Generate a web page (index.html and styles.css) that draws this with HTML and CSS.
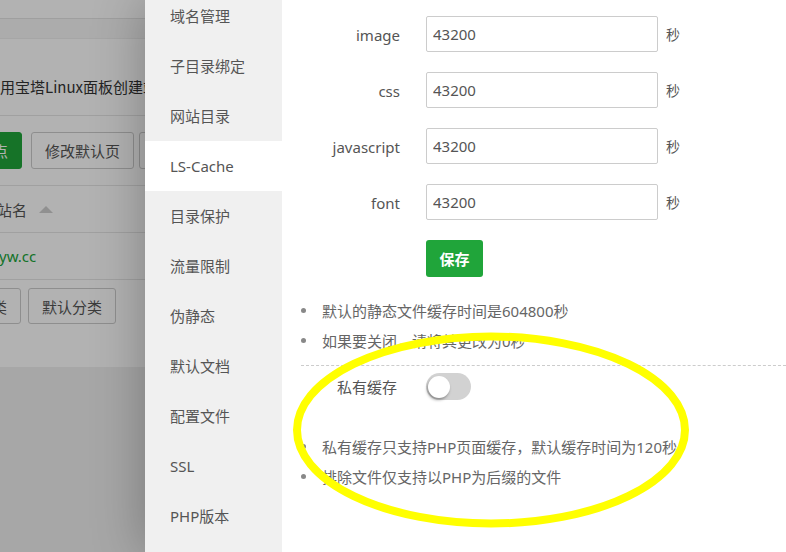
FILE: index.html
```html
<!DOCTYPE html>
<html lang="zh-CN">
<head>
    <meta charset="UTF-8">
    <meta name="viewport" content="width=device-width, initial-scale=1.0">
    <title>LS-Cache</title>
    <link rel="stylesheet" href="styles.css">
</head>
<body>
    <!-- site list page behind the layer -->
    <div class="backdrop">
        <div class="site-page">
            <div class="bar-top"></div>
            <div class="bar-tabs"></div>
            <div class="bar-tip"><span class="tip-text">使用宝塔Linux面板创建站点</span></div>
            <div class="bar-tools">
                <button class="btn btn-green">添加站点</button>
                <button class="btn">修改默认页</button>
                <button class="btn">默认站点</button>
            </div>
            <div class="bar-head"><span class="head-text">网站名</span><span class="sort-up"></span></div>
            <div class="bar-row"><span class="site-link">yw.cc</span></div>
            <div class="bar-cats">
                <button class="btn btn-cut">分类</button>
                <button class="btn">默认分类</button>
            </div>
        </div>
        <div class="shade"></div>
    </div>

    <div class="panel">
        <ul class="tabs">
            <li>域名管理</li>
            <li>子目录绑定</li>
            <li>网站目录</li>
            <li class="active">LS-Cache</li>
            <li>目录保护</li>
            <li>流量限制</li>
            <li>伪静态</li>
            <li>默认文档</li>
            <li>配置文件</li>
            <li>SSL</li>
            <li>PHP版本</li>
        </ul>

        <div class="content">
            <form class="cache-form">
                <div class="form-row">
                    <label for="image">image</label>
                    <input type="text" id="image" value="43200">
                    <span class="unit">秒</span>
                </div>
                <div class="form-row">
                    <label for="css">css</label>
                    <input type="text" id="css" value="43200">
                    <span class="unit">秒</span>
                </div>
                <div class="form-row">
                    <label for="javascript">javascript</label>
                    <input type="text" id="javascript" value="43200">
                    <span class="unit">秒</span>
                </div>
                <div class="form-row">
                    <label for="font">font</label>
                    <input type="text" id="font" value="43200">
                    <span class="unit">秒</span>
                </div>
                <div class="save-row">
                    <button type="button" class="save-btn">保存</button>
                </div>
            </form>

            <ul class="notes notes-first">
                <li>默认的静态文件缓存时间是604800秒</li>
                <li>如果要关闭，请将其更改为0秒</li>
            </ul>

            <div class="private-row">
                <span class="private-label">私有缓存</span>
                <span class="switch"><span class="knob"></span></span>
            </div>

            <ul class="notes notes-second">
                <li>私有缓存只支持PHP页面缓存，默认缓存时间为120秒</li>
                <li>排除文件仅支持以PHP为后缀的文件</li>
            </ul>

            <svg class="mark" width="504" height="552" viewBox="0 0 504 552">
                <ellipse cx="209" cy="430" rx="194" ry="93.5" fill="none" stroke="#ffff00" stroke-width="8"/>
            </svg>
        </div>
    </div>
</body>
</html>
```

FILE: styles.css
```css
* {
    margin: 0;
    padding: 0;
    box-sizing: border-box;
}

body {
    font-family: "Noto Sans", "Noto Sans CJK SC", sans-serif;
    width: 786px;
    height: 552px;
    overflow: hidden;
    display: flex;
    background: #f0f0f0;
}

/* page behind the layer */
.backdrop {
    width: 145px;
    flex-shrink: 0;
    position: relative;
    overflow: hidden;
    background: #f0f0f0;
}

.site-page {
    width: 145px;
    background: #fff;
    white-space: nowrap;
    overflow: hidden;
}

.bar-top {
    height: 19px;
    border-bottom: 1px solid #e4e4e4;
}

.bar-tabs {
    height: 19px;
    background: #f7f7f7;
}

.bar-tip {
    height: 78px;
    padding-top: 38px;
    border-top: 1px solid #eee;
    border-bottom: 1px solid #e6e6e6;
    line-height: 20px;
}

.tip-text {
    margin-left: -15px;
    font-family: "Noto Sans CJK SC", sans-serif;
    font-size: 15px;
    color: #333;
}

.bar-tools {
    height: 70px;
    display: flex;
    align-items: center;
    border-bottom: 1px solid #e6e6e6;
}

.btn {
    font-family: inherit;
    height: 37px;
    padding: 0 13px;
    font-size: 15px;
    color: #555;
    background: #fff;
    border: 1px solid #ccc;
    border-radius: 3px;
    flex-shrink: 0;
    margin-right: 5px;
}

.btn-green {
    margin-left: -66px;
    margin-right: 9px;
    background: #20a53a;
    border-color: #20a53a;
    color: #fff;
}

.bar-head {
    height: 47px;
    display: flex;
    align-items: center;
    border-bottom: 1px solid #e6e6e6;
    font-size: 15px;
    color: #555;
}

.head-text {
    margin-left: -18px;
}

.sort-up {
    width: 0;
    height: 0;
    margin-left: 12px;
    border-left: 7px solid transparent;
    border-right: 7px solid transparent;
    border-bottom: 7px solid #cfcfcf;
}

.bar-row {
    height: 47px;
    display: flex;
    align-items: center;
    border-bottom: 1px solid #e6e6e6;
}

.site-link {
    margin-left: -1px;
    font-size: 15px;
    color: #20a53a;
}

.bar-cats {
    height: 87px;
    display: flex;
    align-items: flex-start;
    padding-top: 8px;
}

.bar-cats .btn {
    height: 36px;
}

.btn-cut {
    margin-left: -37px;
    margin-right: 7px;
}

.shade {
    position: absolute;
    inset: 0;
    background: rgba(0, 0, 0, 0.3);
}

/* layer panel */
.panel {
    flex: 1;
    display: flex;
    position: relative;
    box-shadow: 1px 1px 50px rgba(0, 0, 0, 0.3);
}

.tabs {
    width: 137px;
    flex-shrink: 0;
    list-style: none;
    background: #f0f0f0;
    margin-top: -9px;
}

.tabs li {
    height: 50px;
    line-height: 50px;
    padding-left: 25px;
    font-size: 15px;
    color: #555;
}

.tabs li.active {
    background: #fff;
}

.content {
    flex: 1;
    position: relative;
    background: #fff;
    padding: 16px 0 0 19px;
    color: #555;
}

.form-row {
    display: flex;
    align-items: center;
    height: 36px;
    margin-bottom: 20px;
}

.form-row label {
    width: 99px;
    margin-right: 26px;
    padding-top: 2px;
    text-align: right;
    font-size: 15px;
    color: #555;
}

.form-row input {
    width: 232px;
    height: 36px;
    padding: 0 6px;
    border: 1px solid #ccc;
    border-radius: 2px;
    font-family: inherit;
    font-size: 15px;
    color: #555;
}

.unit {
    margin-left: 8px;
    font-size: 14px;
    color: #555;
}

.save-row {
    padding-left: 125px;
    margin-top: 1px;
}

.save-btn {
    width: 57px;
    height: 37px;
    background: #20a53a;
    color: #fff;
    border: none;
    border-radius: 3px;
    font-family: inherit;
    font-size: 15px;
    font-weight: 600;
}

.notes {
    list-style: none;
    font-size: 15px;
    color: #666;
}

.notes li {
    display: flex;
    align-items: center;
    gap: 16px;
    height: 30px;
    white-space: nowrap;
}

.notes li::before {
    content: "";
    width: 5px;
    height: 5px;
    border-radius: 50%;
    background: #888;
    flex-shrink: 0;
}

.notes-first {
    margin-top: 18px;
    padding-bottom: 10px;
    border-bottom: 1px dashed #ccc;
}

.private-row {
    display: flex;
    align-items: center;
    padding-top: 7px;
}

.private-label {
    width: 96px;
    margin-right: 29px;
    text-align: right;
    font-size: 15px;
    color: #555;
}

.switch {
    width: 45px;
    height: 27px;
    border-radius: 14px;
    background: #d2d2d2;
    display: flex;
    align-items: center;
    padding-left: 2px;
}

.knob {
    width: 22px;
    height: 22px;
    border-radius: 50%;
    background: #fff;
    box-shadow: -1px 2px 3px rgba(0, 0, 0, 0.35);
}

.notes-second {
    margin-top: 31px;
}

.mark {
    position: absolute;
    top: 0;
    left: 0;
    pointer-events: none;
}
```
